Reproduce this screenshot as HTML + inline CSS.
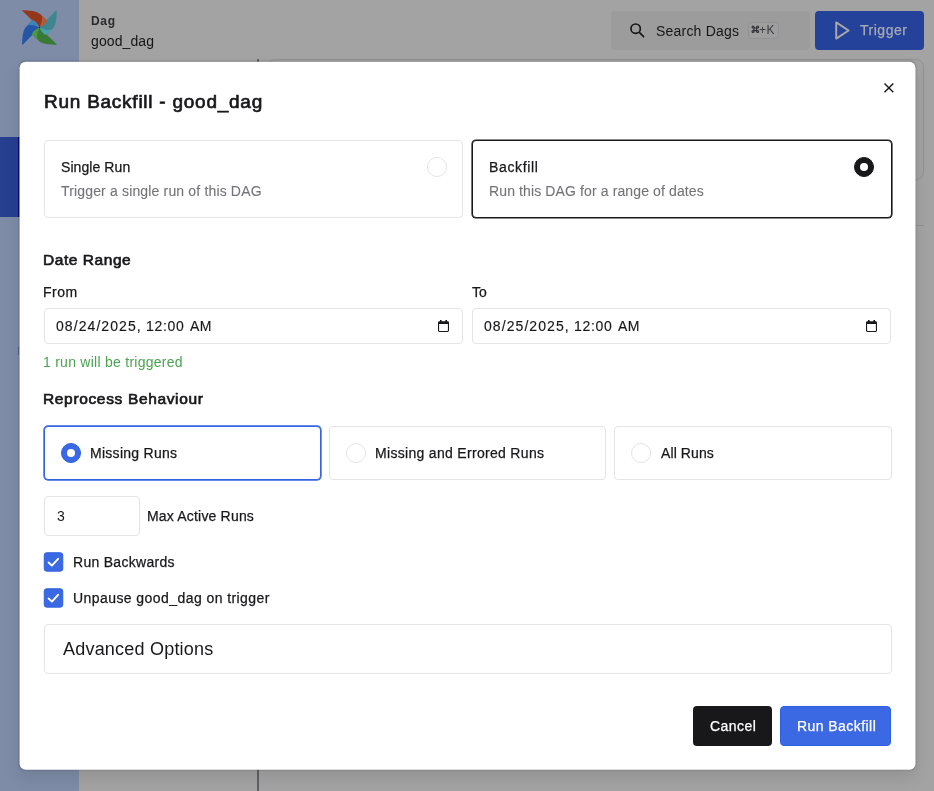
<!DOCTYPE html>
<html>
<head>
<meta charset="utf-8">
<title>Run Backfill - good_dag</title>
<style>
*{box-sizing:border-box;margin:0;padding:0}
html,body{width:934px;height:791px;overflow:hidden}
body{font-family:"Liberation Sans",sans-serif;background:#a3a3a3;position:relative;color:#18181b}
.abs{position:absolute}
.t{position:absolute;white-space:nowrap;line-height:1;will-change:transform}
.sb{-webkit-text-stroke:.68px currentColor}
.md{-webkit-text-stroke:.25px currentColor}
.lt{-webkit-text-stroke:.15px currentColor}
/* background page (dimmed) */
#sidebar{left:0;top:0;width:79px;height:791px;background:#7e8ca8}
#navactive{left:0;top:137px;width:79px;height:80px;background:#263f8f}
#bgcard{left:267px;top:59px;width:657px;height:121px;border:1px solid #929292;border-radius:8px}
#bgline2{left:267px;top:225px;width:657px;height:1px;background:#929292}
#bgline{left:257px;top:59px;width:2px;height:732px;background:#606066}
#search{left:611px;top:11px;width:199px;height:39px;background:#9c9c9d;border-radius:4px}
#kbd{left:748px;top:22px;width:31px;height:17px;border:1px solid #929294;border-radius:4px;background:#9f9fa0}
#trigger{left:815px;top:11px;width:109px;height:39px;background:#25429a;border-radius:4px}
/* modal */
#modal{left:20px;top:62px;width:896px;height:708.2px;transform:translate(-.45px,-.25px);background:#fff;border-radius:6px;box-shadow:0 8px 16px rgba(10,10,14,.1),0 0 2px rgba(10,10,14,.28)}
.card{position:absolute;border:1px solid #e4e4e7;border-radius:4px;background:#fff}
.radio{position:absolute;width:20px;height:20px;border-radius:50%;border:1px solid #e4e4e7;background:#fff}
.muted{color:#737378;-webkit-text-stroke:.1px currentColor}
.btn{position:absolute;height:40px;border-radius:4px;top:706px}
svg{position:absolute;overflow:visible}
</style>
</head>
<body>
<!-- dimmed page -->
<div class="abs" id="sidebar"></div>
<div class="abs" id="navactive"></div>
<div class="abs" id="bgcard"></div>
<div class="abs" id="bgline2"></div>
<div class="abs" id="bgline"></div>
<div class="abs" style="left:17.9px;top:137px;width:1.6px;height:80px;background:#0b0b7c"></div>
<div class="abs" style="left:18.4px;top:347px;width:1.1px;height:8px;background:#4d6396"></div>
<svg id="logo" style="left:22px;top:10px" width="35" height="35" viewBox="0 0 128 128">
<path fill="#2455a6" d="m2.544 127 60.810-62.332a1.124 1.124 0 0 0 .135-1.437c-3.698-5.162-10.521-6.058-13.050-9.527-7.490-10.275-9.391-16.092-12.610-15.730a.984.984 0 0 0-.585.308L15.278 60.800C2.640 73.744.824 102.275.496 126.167a1.190 1.190 0 0 0 2.048.833z"/>
<path fill="#3a7a37" d="M126.990 125.460 64.658 64.647a1.124 1.124 0 0 0-1.439-.136c-5.162 3.700-6.058 10.521-9.527 13.050-10.275 7.490-16.092 9.391-15.730 12.610a.984.984 0 0 0 .308.585l22.518 21.966c12.944 12.638 41.475 14.454 65.367 14.782a1.190 1.190 0 0 0 .835-2.044z"/>
<path fill="#4a9a45" d="M60.792 112.720c-7.076-6.903-10.355-20.559 3.206-48.719-22.046 9.853-29.771 22.803-25.972 26.511z"/>
<path fill="#3e8790" d="M125.450 1.011 64.643 63.343a1.122 1.122 0 0 0-.136 1.437c3.700 5.163 10.520 6.058 13.050 9.527 7.490 10.275 9.393 16.092 12.610 15.730a.98.98 0 0 0 .585-.308l21.966-22.518c12.638-12.944 14.454-41.475 14.782-65.367a1.190 1.190 0 0 0-2.050-.833z"/>
<path fill="#4aa2ac" d="M112.730 67.211c-6.903 7.076-20.559 10.355-48.720-3.206 9.853 22.046 22.803 29.771 26.511 25.972z"/>
<path fill="#93381b" d="m1.002 2.550 62.332 60.807a1.124 1.124 0 0 0 1.436.138c5.163-3.700 6.058-10.521 9.527-13.050 10.275-7.490 16.092-9.391 15.730-12.610a.99.99 0 0 0-.308-.585L67.201 15.284C54.257 2.646 25.726.830 1.834.502a1.190 1.190 0 0 0-.832 2.048z"/>
<path fill="#b15a3c" d="M67.215 15.276c7.076 6.903 10.355 20.559-3.206 48.720 22.046-9.853 29.771-22.806 25.972-26.511z"/>
<path fill="#3b85b8" d="M15.279 60.792c6.903-7.076 20.559-10.355 48.720 3.206-9.853-22.046-22.803-29.771-26.511-25.972z"/>
<circle cx="64.009" cy="63.995" r="2.718" fill="#2f2e2e"/>
</svg>
<div class="t" id="t_dag" style="left:91px;top:15px;font-size:12px;font-weight:bold;color:#2b2b2e;letter-spacing:.7px">Dag</div>
<div class="t" id="t_gd" style="left:91px;top:34px;font-size:14px;color:#151517;letter-spacing:.1px">good_dag</div>
<div class="abs" id="search"></div>
<svg style="left:628.8px;top:21.7px" width="16" height="16" viewBox="0 0 24 24" fill="none" stroke="#161618" stroke-width="2.5"><circle cx="10" cy="10" r="7"/><path d="M15.2 15.2 L22.600 22.600"/></svg>
<div class="t" id="t_search" style="left:656px;top:24px;font-size:14px;color:#161618;letter-spacing:.21px">Search Dags</div>
<div class="abs" id="kbd"></div>
<svg style="left:752.4px;top:26.4px" width="6.6" height="6.6" viewBox="0 0 10 10" fill="none" stroke="#2c2c30" stroke-width="1.6"><path d="M3 1.500A1.500 1.500 0 1 0 1.500 3H8.500A1.500 1.500 0 1 0 7 1.500V8.500A1.500 1.500 0 1 0 8.500 7H1.500A1.500 1.500 0 1 0 3 8.500Z"/></svg>
<div class="t" id="t_kbd" style="left:759px;top:24px;font-size:12px;color:#3a3a40;letter-spacing:.4px">+K</div>
<div class="abs" id="trigger"></div>
<svg style="left:834.5px;top:21px" width="15" height="19" viewBox="0 0 15 19" fill="none" stroke="#a9a9aa" stroke-width="1.9" stroke-linejoin="round"><path d="M1.2 1.4 L13.6 9.5 L1.2 17.6 Z"/></svg>
<div class="t md" id="t_trig" style="left:860px;top:23px;font-size:14px;color:#a9aab2;letter-spacing:.52px">Trigger</div>

<!-- modal -->
<div class="abs" id="modal"></div>
<div class="t sb" id="title" style="left:44px;top:92px;font-size:19px;letter-spacing:.75px">Run Backfill - good_dag</div>
<svg style="left:884.4px;top:83.3px" width="10" height="10" viewBox="0 0 10 10" stroke="#18181b" stroke-width="1.4" fill="none"><path d="M0.5 0.5 L9.3 9.3 M9.3 0.5 L0.5 9.3"/></svg>

<div class="card" style="left:43.75px;top:140.3px;width:419.6px;height:77.4px"></div>
<div class="card" style="left:471.5px;top:140.1px;width:420px;height:77.8px;border-color:#18181b;box-shadow:0 0 0 .6px #18181b"></div>
<div class="t md" id="t_single" style="left:61px;top:160px;font-size:14px;letter-spacing:.08px">Single Run</div>
<div class="t muted" id="t_singled" style="left:61px;top:184px;font-size:14px;letter-spacing:.16px">Trigger a single run of this DAG</div>
<div class="t md" id="t_back" style="left:489px;top:160px;font-size:14px;letter-spacing:.66px">Backfill</div>
<div class="t muted" id="t_backd" style="left:489px;top:184px;font-size:14px;letter-spacing:.12px">Run this DAG for a range of dates</div>
<div class="radio" style="left:426.5px;top:157px"></div>
<div class="radio" style="left:854.3px;top:156.8px;background:#18181b;border-color:#18181b"></div>
<div class="abs" style="left:860.3px;top:162.8px;width:8px;height:8px;border-radius:50%;background:#fff"></div>

<div class="t sb" id="t_dr" style="left:43px;top:252px;font-size:15.5px;letter-spacing:.55px">Date Range</div>
<div class="t md" id="t_from" style="left:43px;top:285px;font-size:14px;letter-spacing:.5px">From</div>
<div class="t md" id="t_to" style="left:472px;top:285px;font-size:14px">To</div>
<div class="card" style="left:43.75px;top:308.1px;width:419.5px;height:36px"></div>
<div class="card" style="left:471.7px;top:308.1px;width:419.8px;height:36px"></div>
<div class="t lt" id="t_d1a" style="left:56px;top:319px;font-size:14px;letter-spacing:1.07px">08/24/2025,</div>
<div class="t lt" id="t_d1b" style="left:146px;top:319px;font-size:14px;letter-spacing:.67px">12:00</div>
<div class="t lt" id="t_d1c" style="left:190px;top:319px;font-size:14px;letter-spacing:.3px">AM</div>
<div class="t lt" id="t_d2a" style="left:484px;top:319px;font-size:14px;letter-spacing:1.07px">08/25/2025,</div>
<div class="t lt" id="t_d2b" style="left:574px;top:319px;font-size:14px;letter-spacing:.67px">12:00</div>
<div class="t lt" id="t_d2c" style="left:618px;top:319px;font-size:14px;letter-spacing:.3px">AM</div>
<svg class="cal" style="left:438px;top:319.5px" width="11" height="12" viewBox="0 0 11 12"><path fill="#18181b" d="M2 0h1.6v1.2h3.8V0H9v1.2h.6A1.4 1.4 0 0 1 11 2.600v8A1.400 1.400 0 0 1 9.600 12H1.400A1.400 1.400 0 0 1 0 10.600v-8A1.400 1.400 0 0 1 1.400 1.200H2zM1.100 3.900v6.600c0 .22.180.4.400.4h8c.22 0 .400-.180.400-.400V3.900z"/></svg>
<svg class="cal" style="left:866px;top:319.5px" width="11" height="12" viewBox="0 0 11 12"><path fill="#18181b" d="M2 0h1.6v1.2h3.8V0H9v1.2h.6A1.4 1.4 0 0 1 11 2.600v8A1.400 1.400 0 0 1 9.600 12H1.400A1.400 1.400 0 0 1 0 10.600v-8A1.400 1.400 0 0 1 1.400 1.200H2zM1.100 3.900v6.600c0 .22.180.4.400.4h8c.22 0 .400-.180.400-.400V3.900z"/></svg>
<div class="t" id="t_runs" style="left:43px;top:355px;font-size:14px;color:#4ba34f;letter-spacing:.26px">1 run will be triggered</div>

<div class="t sb" id="t_rb" style="left:43px;top:391px;font-size:15.5px;letter-spacing:.65px">Reprocess Behaviour</div>
<div class="card" style="left:43.75px;top:426px;width:277.25px;height:54px;border-color:#3563e3;box-shadow:0 0 0 .7px #3563e3"></div>
<div class="card" style="left:329px;top:426px;width:277.25px;height:54px"></div>
<div class="card" style="left:614.25px;top:426px;width:277.25px;height:54px"></div>
<div class="radio" style="left:60.6px;top:443px;background:#3b68e3;border-color:#2d61e1"></div>
<div class="abs" style="left:66.6px;top:449px;width:8px;height:8px;border-radius:50%;background:#fff"></div>
<div class="radio" style="left:345.7px;top:443px"></div>
<div class="radio" style="left:630.5px;top:443px"></div>
<div class="t md" id="t_m1" style="left:90px;top:446px;font-size:14px;letter-spacing:.28px">Missing Runs</div>
<div class="t md" id="t_m2" style="left:375px;top:446px;font-size:14px;letter-spacing:.31px">Missing and Errored Runs</div>
<div class="t md" id="t_m3" style="left:661px;top:446px;font-size:14px;letter-spacing:.09px">All Runs</div>

<div class="card" style="left:43.75px;top:496px;width:95.75px;height:40px"></div>
<div class="t" id="t_3" style="left:57px;top:509px;font-size:14px">3</div>
<div class="t md" id="t_mar" style="left:147px;top:509px;font-size:14px;letter-spacing:.185px">Max Active Runs</div>

<svg style="left:43px;top:552px" width="22" height="22" viewBox="0 0 22 22"><rect x="1.250" y=".75" width="18.500" height="18.400" rx="2.500" fill="#3b68e3" stroke="#2d61e1" stroke-width="1"/><path d="M5.600 10.500 L8.900 13.600 L15.100 6.800" fill="none" stroke="#fff" stroke-width="1.9" stroke-linecap="round" stroke-linejoin="round"/></svg>
<svg style="left:43px;top:588px" width="22" height="22" viewBox="0 0 22 22"><rect x="1.250" y=".75" width="18.500" height="18.400" rx="2.500" fill="#3b68e3" stroke="#2d61e1" stroke-width="1"/><path d="M5.600 10.500 L8.900 13.600 L15.100 6.800" fill="none" stroke="#fff" stroke-width="1.9" stroke-linecap="round" stroke-linejoin="round"/></svg>
<div class="t md" id="t_c1" style="left:73px;top:555px;font-size:14px;letter-spacing:.29px">Run Backwards</div>
<div class="t md" id="t_c2" style="left:73px;top:591px;font-size:14px;letter-spacing:.43px">Unpause good_dag on trigger</div>

<div class="card" style="left:43.75px;top:624px;width:847.75px;height:50px"></div>
<div class="t" id="t_adv" style="left:63px;top:640px;font-size:18px;letter-spacing:.21px">Advanced Options</div>

<div class="btn" style="left:692.5px;width:79.5px;background:#18181b"></div>
<div class="btn" style="left:780px;width:111.2px;background:#3b68e3;border:1px solid #2d61e1"></div>
<div class="t md" id="t_cancel" style="left:710px;top:719px;font-size:14px;color:#fff;letter-spacing:.44px">Cancel</div>
<div class="t md" id="t_runb" style="left:797px;top:719px;font-size:14px;color:#fff;letter-spacing:.44px">Run Backfill</div>
</body>
</html>
